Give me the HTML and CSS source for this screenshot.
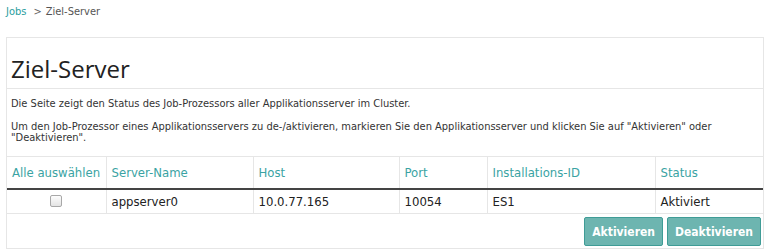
FILE: index.html
```html
<!DOCTYPE html>
<html lang="de">
<head>
<meta charset="utf-8">
<title>Ziel-Server</title>
<link rel="stylesheet" href="styles.css">
</head>
<body>
<div class="crumbs"><a class="crumb-link" href="#">Jobs</a><span class="crumb-sep">&gt;</span><span class="crumb-current">Ziel-Server</span></div>
<div class="panel">
  <div class="panel-head"><h1 class="title">Ziel-Server</h1></div>
  <div class="panel-body">
    <p class="desc">Die Seite zeigt den Status des Job-Prozessors aller Applikationsserver im Cluster.</p>
    <p class="desc">Um den Job-Prozessor eines Applikationsservers zu de-/aktivieren, markieren Sie den Applikationsserver und klicken Sie auf "Aktivieren" oder "Deaktivieren".</p>
  </div>
  <table class="grid">
    <colgroup>
      <col class="c1"><col class="c2"><col class="c3"><col class="c4"><col class="c5"><col class="c6">
    </colgroup>
    <thead>
      <tr>
        <th>Alle auswählen</th>
        <th>Server-Name</th>
        <th>Host</th>
        <th>Port</th>
        <th>Installations-ID</th>
        <th>Status</th>
      </tr>
    </thead>
    <tbody>
      <tr>
        <td class="check-cell"><span class="check"></span></td>
        <td>appserver0</td>
        <td>10.0.77.165</td>
        <td>10054</td>
        <td>ES1</td>
        <td>Aktiviert</td>
      </tr>
    </tbody>
  </table>
  <div class="actions">
    <button class="btn">Aktivieren</button>
    <button class="btn">Deaktivieren</button>
  </div>
</div>
</body>
</html>
```
FILE: styles.css
```css
html, body {
  margin: 0;
  background: #fff;
}
body {
  padding: 0 5px 0 6px;
  font-family: "DejaVu Sans Condensed", "DejaVu Sans", Verdana, sans-serif;
  font-stretch: condensed;
  color: #333;
}
.crumbs {
  height: 24px;
  padding-top: 5px;
  font-size: 11px;
  line-height: 14px;
  box-sizing: border-box;
}
.crumb-link {
  color: #2a9d9d;
  text-decoration: none;
}
.crumb-sep {
  color: #666;
  margin: 0 4px 0 7px;
}
.crumb-current {
  color: #555;
}
.panel {
  margin-top: 13px;
  border: 1px solid #e6e6e6;
  background: #fff;
}
.panel-head {
  height: 50px;
  border-bottom: 1px solid #e6e6e6;
  display: flex;
  align-items: flex-end;
}
.title {
  margin: 0 0 4px 4px;
  font-family: "Open Sans", sans-serif;
  font-stretch: normal;
  font-weight: 400;
  font-size: 24px;
  line-height: 30px;
  color: #222;
}
.panel-body {
  padding: 9px 4px 6px 4px;
  height: 67px;
  box-sizing: border-box;
}
.desc {
  margin: 0 0 12px 0;
  font-size: 11px;
  line-height: 11px;
  color: #333;
}
.desc:last-child {
  margin-bottom: 0;
}
.grid {
  width: 100%;
  border-collapse: collapse;
  table-layout: fixed;
}
.c1 { width: 99px; }
.c2 { width: 147px; }
.c3 { width: 146px; }
.c4 { width: 88px; }
.c5 { width: 168px; }
.c6 { width: auto; }
.grid th {
  height: 31px;
  text-align: left;
  font-weight: 400;
  font-size: 13px;
  color: #3aa3a3;
  padding: 0 5px;
  border-top: 1px solid #e6e6e6;
  border-left: 1px solid #e6e6e6;
  border-bottom: 2px solid #444;
  white-space: nowrap;
}
.grid td {
  height: 23px;
  font-size: 13px;
  color: #222;
  padding: 0 5px;
  border-left: 1px solid #e6e6e6;
  border-bottom: 1px solid #e6e6e6;
}
.grid th:first-child, .grid td:first-child {
  border-left: none;
}
.check-cell {
  text-align: center;
}
.check {
  display: inline-block;
  width: 10px;
  height: 10px;
  border: 1px solid #a8a8a8;
  border-radius: 2px;
  background: linear-gradient(#fdfdfd, #e4e4e4);
  vertical-align: middle;
  margin-top: -3px;
}
.actions {
  display: flex;
  justify-content: flex-end;
  gap: 4px;
  padding: 3px 2px 2px 0;
}
.btn {
  font-family: "DejaVu Sans Condensed", "DejaVu Sans", Verdana, sans-serif;
  font-stretch: condensed;
  font-size: 12px;
  font-weight: 700;
  color: #fff;
  background: #6db5b0;
  border: 1px solid #3f9c96;
  border-radius: 2px;
  height: 29px;
  padding: 0 7px;
}
```
